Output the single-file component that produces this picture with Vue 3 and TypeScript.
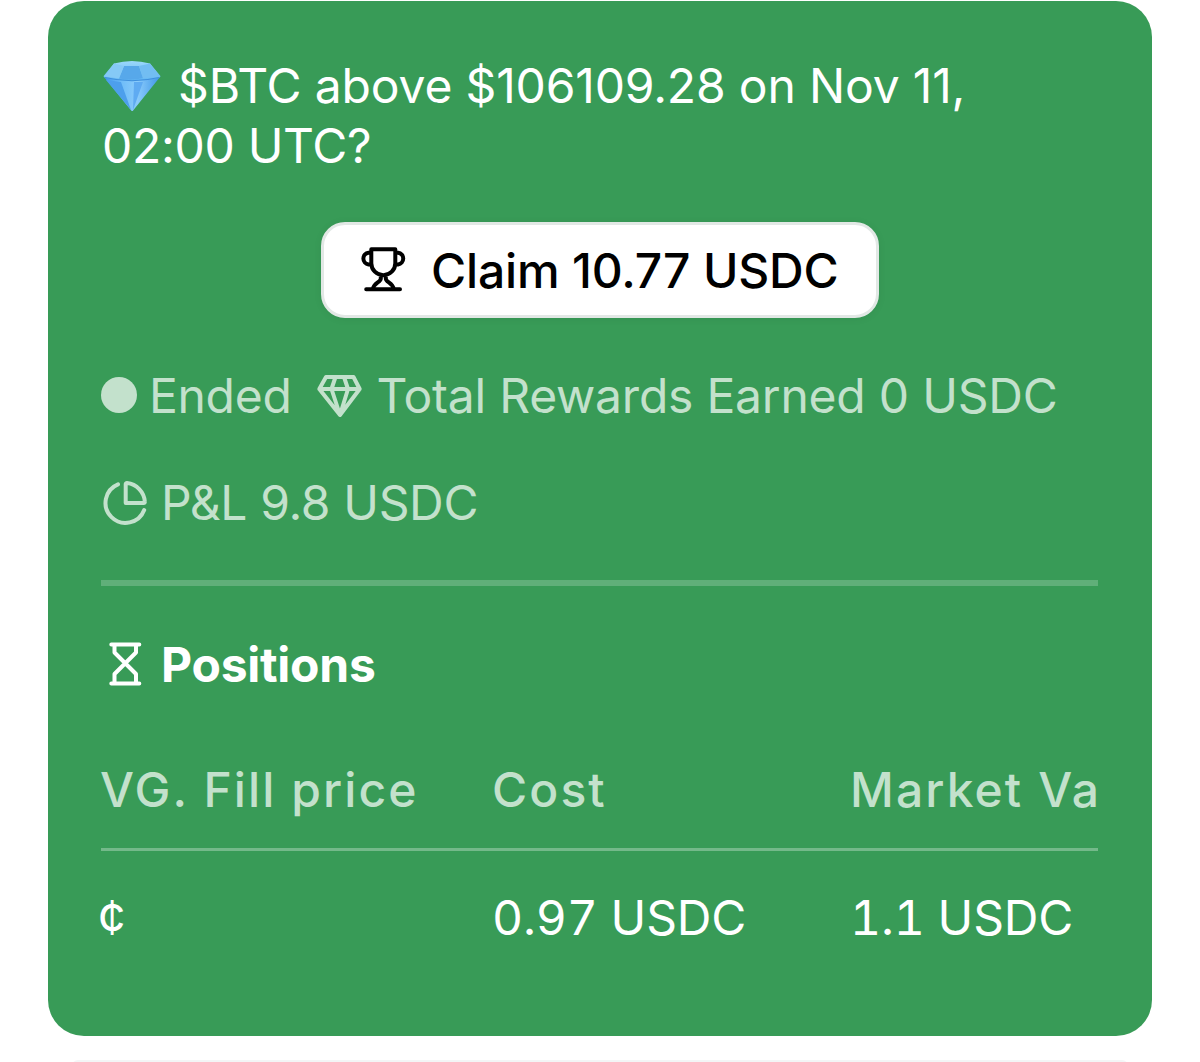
<script setup lang="ts">
interface Column {
  label: string
  value: string
}

const columns: Column[] = [
  { label: 'VG. Fill price', value: '¢' },
  { label: 'Cost', value: '0.97 USDC' },
  { label: 'Market Va', value: '1.1 USDC' },
]
</script>

<template>
  <main class="page">
    <article class="card">
      <h1 class="title">
        <svg class="emoji" viewBox="0 0 58 52" aria-hidden="true">
          <defs>
            <linearGradient id="crown" x1="0" y1="0" x2="0" y2="1">
              <stop offset="0" stop-color="#9bd7fb" />
              <stop offset="1" stop-color="#5fb5f3" />
            </linearGradient>
            <linearGradient id="pavilion" x1="0" y1="0" x2="1" y2="0">
              <stop offset="0" stop-color="#3c93ea" />
              <stop offset="0.3" stop-color="#6ebcf8" />
              <stop offset="0.6" stop-color="#8acbfb" />
              <stop offset="1" stop-color="#3f96e8" />
            </linearGradient>
          </defs>
          <path d="M1 17 29 21 57 17 30.300 50.200Q29.300 52 28 50.200Z" fill="url(#pavilion)" />
          <path d="M11 3.500Q29 -1.500 47 3.500L57 15.500Q58 17 55 18Q29 24 3 18Q0 17 1 15.500Z" fill="url(#crown)" />
          <path d="M21 6H36L40 18Q29 21 16 18.500Z" fill="#57a8ea" />
          <path d="M11 3.500 21 6 16 18.500 1 16.500Z" fill="#85c9f6" />
          <path d="M47 3.500 36 6 40 18.500 57 16.500Z" fill="#72bdf2" />
          <path d="M3 20 28 50 18 22Z" fill="#4d9fec" />
          <path d="M40 22 30 50 31 22Z" fill="#5fabf2" />
          <path d="M2 17.500Q29 24 56 17.500" fill="none" stroke="#3f8fdd" stroke-width="1.200" />
        </svg>
        <span class="line first">$BTC above $106109.28 on Nov 11,</span>
        <span class="line second">02:00 UTC?</span>
      </h1>

      <button class="claim" type="button">
        <svg class="icon" viewBox="0 0 48 48" aria-hidden="true">
          <path d="M12.300 3.300H36.300V17.200a12 12 0 0 1-24 0ZM12.300 6.700H9.500a5.900 5.900 0 0 0 0 11.700h3M36.300 6.700h2.800a5.900 5.900 0 0 1 0 11.700h-3M21.800 30v2.500c0 4-7 4-7.800 10.500M26.800 30v2.500c0 4 7 4 7.800 10.500M7.200 43.300H41" />
        </svg>
        <span class="claim-text">Claim 10.77 USDC</span>
      </button>

      <div class="meta">
        <span class="dot"></span>
        <span class="ended">Ended</span>
        <svg class="icon gem" viewBox="0 0 48 48" aria-hidden="true">
          <path d="M10 4H37.500L43.700 16 24 42 3.300 16ZM3.300 16H43.700M19.500 4 15.500 16 24 42 32 16 28 4" />
        </svg>
        <span class="rewards">Total Rewards Earned 0 USDC</span>
      </div>

      <div class="meta pnl">
        <svg class="icon pie" viewBox="0 0 48 48" aria-hidden="true">
          <path d="M17 5.300A20 20 0 1 0 43.200 31M24.700 5Q24.700 4 26 4.100A20 20 0 0 1 43.800 22.500Q44 24 42.500 24H24.700Z" />
        </svg>
        <span class="pnl-text">P&amp;L 9.8 USDC</span>
      </div>

      <hr class="rule" />

      <h2 class="heading">
        <svg class="icon hourglass" viewBox="0 0 48 48" aria-hidden="true">
          <path d="M10.300 4.500H38.300M10.300 43.500H38.300M13.500 4.500V12.500L35 34V43.500M35 4.500V12.500L13.500 34V43.500" />
        </svg>
        <span class="heading-text">Positions</span>
      </h2>

      <table class="positions">
        <thead>
          <tr>
            <th v-for="c in columns" :key="c.label">{{ c.label }}</th>
          </tr>
        </thead>
        <tbody>
          <tr>
            <td v-for="c in columns" :key="c.label">{{ c.value }}</td>
          </tr>
        </tbody>
      </table>
    </article>
    <div class="next-card"></div>
  </main>
</template>

<style>
body {
  margin: 0;
  background: #fff;
}
</style>

<style scoped>
.page {
  box-sizing: border-box;
  width: 1200px;
  height: 1062px;
  padding: 1px 48px 0;
  overflow: hidden;
  background: #fff;
  font-family: Inter, 'Liberation Sans', sans-serif;
  font-size: 48px;
  line-height: 60px;
}
.card {
  box-sizing: border-box;
  height: 1035px;
  padding: 55px 54px 0 53px;
  border-radius: 36px;
  background: #389b57;
  color: #fff;
}
.title {
  display: grid;
  grid-template-columns: 58px 1fr;
  margin: 0;
  font-size: 48px;
  font-weight: 400;
  white-space: nowrap;
}
.emoji {
  width: 58px;
  height: 52px;
  margin: 4px 0 0 2px;
}
.first {
  margin-left: 19px;
  letter-spacing: -0.16px;
}
.second {
  grid-column: 1 / 3;
  margin-left: 1px;
  letter-spacing: -0.3px;
}
.icon {
  flex: none;
  width: 48px;
  height: 48px;
  fill: none;
  stroke: currentColor;
  stroke-width: 4;
  stroke-linecap: round;
  stroke-linejoin: round;
}
.claim {
  display: flex;
  box-sizing: border-box;
  align-items: center;
  width: 558px;
  height: 96px;
  margin: 46px 0 0 220px;
  padding: 0 0 0 35px;
  border: 3px solid #e2e8e5;
  border-radius: 24px;
  background: #fff;
  box-shadow: 0 1px 8px rgba(0, 0, 0, 0.06);
  color: #000;
  font: 500 48px/60px Inter, sans-serif;
  white-space: nowrap;
}
.claim-text {
  margin: 2px 0 0 24px;
  letter-spacing: -0.17px;
}
.meta {
  display: flex;
  align-items: center;
  height: 60px;
  margin-top: 49px;
  color: #c3e1cc;
  white-space: nowrap;
}
.dot {
  width: 36px;
  height: 36px;
  margin-top: -4px;
  border-radius: 50%;
  background: currentColor;
}
.ended {
  margin: -2px 0 0 12px;
  letter-spacing: -0.3px;
}
.gem {
  margin-left: 25px;
}
.rewards {
  margin: -2px 0 0 12px;
  letter-spacing: -0.22px;
}
.pnl {
  margin-top: 46px;
}
.pie {
  margin-top: -1px;
}
.pnl-text {
  margin-left: 12px;
  letter-spacing: -0.35px;
}
.rule {
  height: 6px;
  margin: 47px 0 0;
  border: 0;
  background: #60af79;
}
.heading {
  display: flex;
  align-items: center;
  height: 60px;
  margin: 49px 0 0;
  font-size: 48px;
  font-weight: 700;
}
.hourglass {
  margin-top: -2px;
}
.heading-text {
  margin-left: 12px;
  letter-spacing: -0.25px;
}
.positions {
  width: 997px;
  margin-top: 57px;
  border-collapse: collapse;
  table-layout: fixed;
  text-align: left;
  white-space: nowrap;
}
.positions th {
  height: 97px;
  box-sizing: border-box;
  padding: 0 0 20px;
  border-bottom: 3px solid #74b98a;
  color: #c3e1cc;
  font-weight: 500;
  letter-spacing: 2.1px;
}
.positions th:nth-child(1) {
  width: 391px;
  text-indent: -1px;
}
.positions th:nth-child(2) {
  width: 358px;
}
.positions td {
  padding: 37px 0 0;
  font-variant-numeric: tabular-nums;
  letter-spacing: -0.12px;
}
.positions td:first-child {
  text-indent: -3px;
}
.next-card {
  height: 12px;
  margin: 24px 24px 0;
  border-radius: 12px;
  background: #f3f5f6;
}
</style>
